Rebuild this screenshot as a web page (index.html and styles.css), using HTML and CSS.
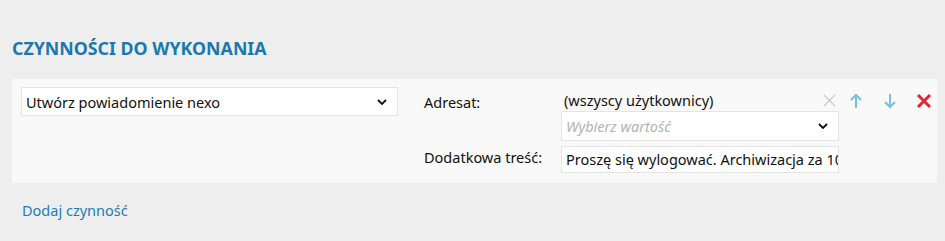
FILE: index.html
```html
<!DOCTYPE html>
<html lang="pl">
<head>
    <meta charset="UTF-8">
    <title>Czynności do wykonania</title>
    <link rel="stylesheet" href="styles.css">
</head>
<body>
    <div class="section">
        <h2 class="section-title">CZYNNOŚCI DO WYKONANIA</h2>

        <div class="action-row">
            <div class="action-type">
                <div class="select">
                    <span class="select-text">Utwórz powiadomienie nexo</span>
                    <svg class="chevron" viewBox="0 0 10 6"><path d="M1 1L5 5L9 1" fill="none" stroke="#111" stroke-width="1.8"/></svg>
                </div>
            </div>

            <div class="action-params">
                <div class="param-row">
                    <div class="param-label">Adresat:</div>
                    <div class="param-field">
                        <div class="param-value">(wszyscy użytkownicy)</div>
                        <div class="select select-small">
                            <span class="select-text placeholder">Wybierz wartość</span>
                            <svg class="chevron" viewBox="0 0 10 6"><path d="M1 1L5 5L9 1" fill="none" stroke="#111" stroke-width="1.8"/></svg>
                        </div>
                    </div>
                </div>
                <div class="param-row param-row-center">
                    <div class="param-label">Dodatkowa treść:</div>
                    <div class="param-field">
                        <div class="text-input">Proszę się wylogować. Archiwizacja za 10 minut.</div>
                    </div>
                </div>
            </div>

            <!-- przyciski wiersza leżą nad polem wyboru -->
            <div class="row-tools">
                <svg class="tool tool-clear" viewBox="0 0 16 16"><path d="M2 2L14 14M14 2L2 14" stroke="#c4c4c4" stroke-width="1.2"/></svg>
                <svg class="tool" viewBox="0 0 16 16"><path d="M8 15V2M3 7L8 2L13 7" fill="none" stroke="#76bfe0" stroke-width="2"/></svg>
                <svg class="tool" viewBox="0 0 16 16"><path d="M8 1V14M3 9L8 14L13 9" fill="none" stroke="#76bfe0" stroke-width="2"/></svg>
                <svg class="tool" viewBox="0 0 16 16"><path d="M2 2L14 14M14 2L2 14" stroke="#e3262c" stroke-width="3"/></svg>
            </div>
        </div>

        <a href="#" class="add-link">Dodaj czynność</a>
    </div>
</body>
</html>
```

FILE: styles.css
```css
body {
    margin: 0;
    background-color: #eeeeee;
    font-family: "Noto Sans", "Open Sans", sans-serif;
    color: #111;
    font-size: 14.5px;
}

.section {
    padding: 34px 8px 0 12px;
}

.section-title {
    margin: 0 0 17px 0;
    font-size: 17.8px;
    font-weight: 700;
    color: #1b79ae;
    line-height: 28px;
}

.action-row {
    position: relative;
    display: flex;
    background-color: #f9f9f9;
    padding: 8px 9px 7px 9px;
    min-height: 89px;
}

.action-type {
    width: 377px;
    flex-shrink: 0;
}

.select {
    display: flex;
    align-items: center;
    justify-content: space-between;
    height: 27px;
    border: 1px solid #e4e4e4;
    background-color: #fff;
    padding: 0 10px 0 4px;
}

.select-text {
    white-space: nowrap;
    overflow: hidden;
}

.placeholder {
    color: #b3b3b3;
    font-style: italic;
}

.chevron {
    width: 10px;
    height: 6px;
    flex-shrink: 0;
}

.action-params {
    margin-left: 26px;
    width: 416px;
    flex-shrink: 0;
}

.param-row {
    display: flex;
}

.param-row-center {
    align-items: center;
}

.param-label {
    width: 137px;
    padding-top: 5px;
}

.param-row-center .param-label {
    padding-top: 0;
}

.param-field {
    width: 278px;
}

.param-value {
    padding: 3px 0 0 3px;
    line-height: 21px;
}

.select-small {
    height: 28px;
    padding-left: 4px;
}

.text-input {
    margin-top: 5px;
    height: 25px;
    line-height: 25px;
    border: 1px solid #e4e4e4;
    background-color: #fff;
    padding: 0 0 0 4px;
    white-space: nowrap;
    overflow: hidden;
}

.row-tools {
    position: absolute;
    top: 14px;
    right: 5px;
    display: flex;
    gap: 18px;
}

.tool {
    width: 16px;
    height: 16px;
}

.tool-clear {
    width: 15px;
    height: 15px;
    margin-right: -7px;
}

.add-link {
    display: inline-block;
    margin: 17px 0 0 10px;
    color: #1f7bb5;
    text-decoration: none;
}
```
